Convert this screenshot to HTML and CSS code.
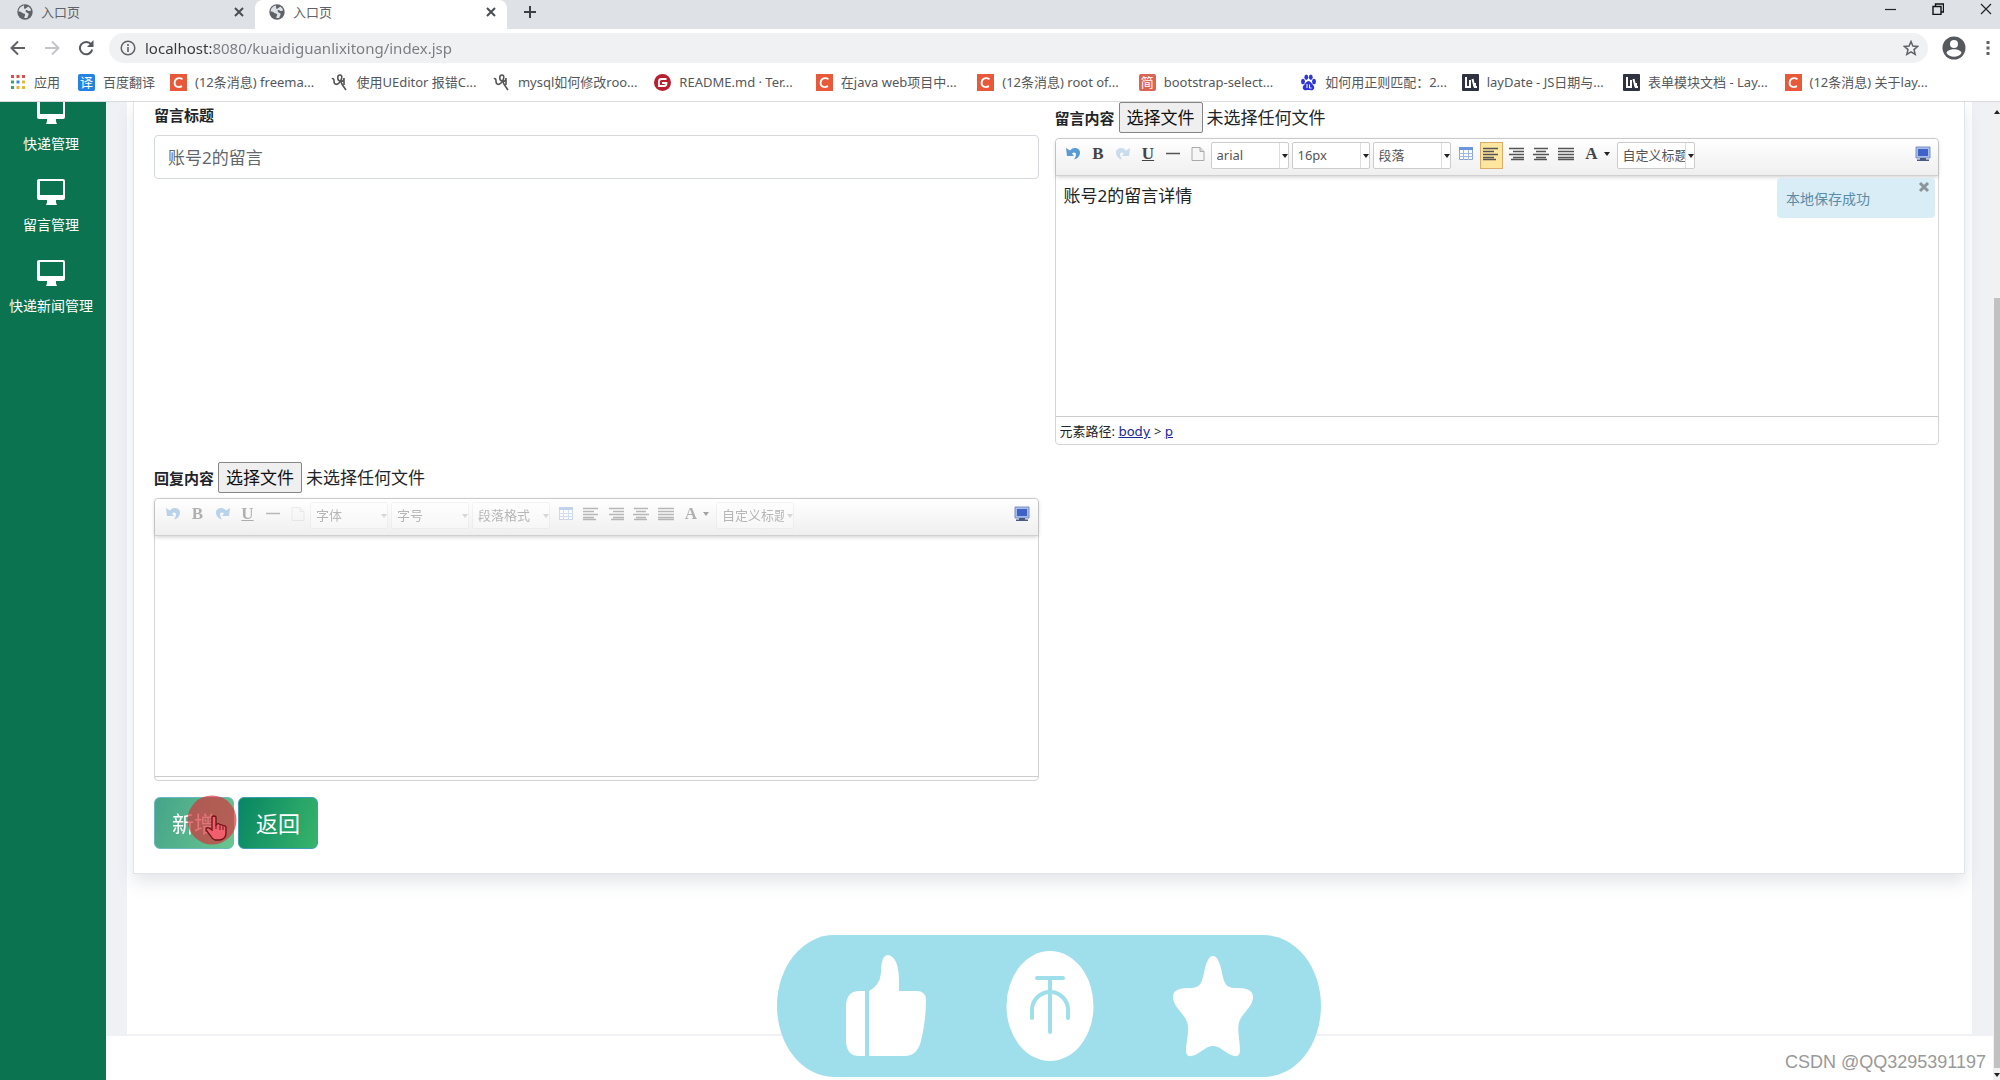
FILE: index.html
```html
<!DOCTYPE html>
<html lang="zh-CN">
<head>
<meta charset="utf-8">
<title>入口页</title>
<link rel="stylesheet" href="styles.css">
</head>
<body>
<svg class="defs" aria-hidden="true">
  <symbol id="globe" viewBox="0 0 16 16"><circle cx="8" cy="8" r="7.7" fill="#5f6368"/><path d="M7 1.6C4 2 1.8 4.500 1.600 7.500c1.400.2 2.800.4 3.500 1.200.8 1 2.600.5 3 1.700.3 1-.9 1.600-.8 3.400 1 .4 2.300.3 3.200-.1-.2-1.500 1.300-2 1.100-3.600-.2-1.300-1.900-1.200-2.500-2.100-.7-1-.8-1.700.3-2 1.200-.2 1.500 1.200 2.700 1.100.9 0 1.600-.5 2-.9-.5-1.600-1.600-2.900-3-3.700-.4 1-1.700 1.200-2.300 1.900-.5.600-1.200.6-1.600 0-.5-.8.300-1.500-.2-2.800z" fill="#dfe2e6"/></symbol>
  <symbol id="x" viewBox="0 0 12 12"><path d="M2 2l8 8M10 2l-8 8" stroke="#4a4d51" stroke-width="2" fill="none"/></symbol>
  <symbol id="csdn" viewBox="0 0 17 17"><path d="M0 0h17v17H0z" fill="#e8593a"/><path d="M12.500 5.200C9.500 3 5 4 4.600 8.500c-.3 4.500 4 5.500 7.400 3.600" stroke="#fff" stroke-width="1.800" fill="none"/></symbol>
  <symbol id="ue" viewBox="0 0 17 17"><path d="M1 5c1-1 2 0 2 2 0 4 3 4 5 2 3-3 4-8 1-8S6 6 9 7s4-1 4-3v7M10 8c1 3 3 5 5 8" stroke="#555" stroke-width="1.600" fill="none"/></symbol>
  <symbol id="lay" viewBox="0 0 17 17"><rect width="17" height="17" rx="1" fill="#2f3241"/><path d="M4 3v10h4V6M10.500 5l2 8M13 9v4h2" stroke="#fff" stroke-width="2" fill="none"/></symbol>
  <symbol id="monitor" viewBox="0 0 28 26"><path fill-rule="evenodd" d="M2 0h24q2 0 2 2v17q0 2-2 2h-7v2q0 1 1 3H9q1-2 1-3v-2H2q-2 0-2-2V2Q0 0 2 0zm1 2v14h23V2z" fill="#fff"/></symbol>
  <symbol id="undo" viewBox="0 0 16 16"><path d="M1 2l1 8h7L7 7.500c2-2 4-1 4 1 0 2-1 3-2 5 4-1 6-4 6-7 0-5-7-6-10-2z" fill="#5b9bd5"/></symbol>
  <symbol id="rule" viewBox="0 0 16 16"><path d="M1 7.500h14" stroke="#555" stroke-width="1.500"/></symbol>
  <symbol id="paste" viewBox="0 0 16 16"><path d="M2 1.500h8l4 4V14.500H2z" fill="#f6f6f6" stroke="#aaa"/><path d="M10 1.500v4h4" fill="#ddd" stroke="#aaa"/></symbol>
  <symbol id="table" viewBox="0 0 16 16"><path d="M1.500 1.500h13v12h-13z" fill="#fff" stroke="#8aa5cf"/><path d="M1 1h14v3H1z" fill="#6b95dc"/><path d="M1 7.500h14M1 10.500h14M5.500 4v10M10.500 4v10" stroke="#9db8de"/></symbol>
  <symbol id="al" viewBox="0 0 16 16"><path d="M0 2.500h15M0 5.500h11M0 8.500h15M0 11.500h11M0 13.500h13" stroke="#555" stroke-width="1.300"/></symbol>
  <symbol id="ar" viewBox="0 0 16 16"><path d="M1 2.500h15M5 5.500h11M1 8.500h15M5 11.500h11M3 13.500h13" stroke="#555" stroke-width="1.300"/></symbol>
  <symbol id="ac" viewBox="0 0 16 16"><path d="M1 2.500h14M3 5.500h10M0 8.500h16M3 11.500h10M1 13.500h13" stroke="#555" stroke-width="1.300"/></symbol>
  <symbol id="aj" viewBox="0 0 16 16"><path d="M0 2.500h16M0 5.500h16M0 8.500h16M0 11.500h16M0 13.500h16" stroke="#555" stroke-width="1.300"/></symbol>
  <symbol id="caret" viewBox="0 0 6 4"><path d="M0 0h6L3 4z" fill="#222"/></symbol>
  <symbol id="screen" viewBox="0 0 16 16"><path d="M1 1h14v11H1z" fill="#a9bce8" stroke="#7890c8"/><path d="M3 3h10v7H3z" fill="#3f62c8"/><path d="M5 12h6v1.500h3V15H2v-1.500h3z" fill="#4a5a80"/></symbol>
</svg>

<header class="browser">
  <div class="tabs">
    <div class="tab"><svg class="i16"><use href="#globe"/></svg><span>入口页</span><button class="plain" aria-label="关闭"><svg class="i12"><use href="#x"/></svg></button></div>
    <div class="tab active"><svg class="i16"><use href="#globe"/></svg><span>入口页</span><button class="plain" aria-label="关闭"><svg class="i12"><use href="#x"/></svg></button></div>
    <button class="plain newtab" aria-label="新标签页"><svg class="i14" viewBox="0 0 14 14"><path d="M7 1v12M1 7h12" stroke="#3c4043" stroke-width="2"/></svg></button>
    <div class="window">
      <button class="plain" aria-label="最小化"><svg class="i12" viewBox="0 0 12 12"><path d="M1 6.500h11" stroke="#222" stroke-width="1.200"/></svg></button>
      <button class="plain" aria-label="还原"><svg class="i12" viewBox="0 0 12 12"><path d="M1 3.500h8v8H1zM3.500 3V1H11.500v8H9.500" stroke="#111" stroke-width="1.400" fill="none"/></svg></button>
      <button class="plain" aria-label="关闭窗口"><svg class="i12" viewBox="0 0 12 12"><path d="M1 1l10 10M11 1L1 11" stroke="#222" stroke-width="1.200"/></svg></button>
    </div>
  </div>
  <div class="nav">
    <button class="plain" aria-label="后退"><svg class="i16" viewBox="0 0 16 16"><path d="M15 8H2M8 1.500L1.500 8 8 14.500" stroke="#5f6368" stroke-width="2" fill="none"/></svg></button>
    <button class="plain" aria-label="前进"><svg class="i16" viewBox="0 0 16 16"><path d="M1 8h13M8 1.500L14.500 8 8 14.500" stroke="#c4c6c9" stroke-width="2" fill="none"/></svg></button>
    <button class="plain" aria-label="刷新"><svg class="i16" viewBox="0 0 16 16"><path d="M13.200 4.500A6.200 6.200 0 1 0 14.200 9.500" stroke="#55595e" stroke-width="2" fill="none"/><path d="M15.500 0v7H9z" fill="#55595e"/></svg></button>
    <div class="address">
      <svg class="i16" viewBox="0 0 16 16"><circle cx="8" cy="8" r="6.800" stroke="#5f6368" stroke-width="1.500" fill="none"/><path d="M8 7v5M8 4v2" stroke="#5f6368" stroke-width="1.600"/></svg>
      <input class="url" type="text" aria-label="地址" value="localhost:8080/kuaidiguanlixitong/index.jsp">
      <svg class="i16" viewBox="0 0 16 16"><path d="M8 1.500l1.900 4.500 4.800.4-3.700 3.200 1.200 4.800L8 11.800l-4.200 2.600L5 9.600 1.300 6.400 6.100 6z" stroke="#5f6368" stroke-width="1.500" fill="none"/></svg>
    </div>
    <button class="plain profile" aria-label="用户"><svg class="i24" viewBox="0 0 24 24"><circle cx="12" cy="12" r="11.500" fill="#55595e"/><circle cx="12" cy="8" r="4" fill="#fff"/><path d="M4.500 17c1-5 14-5 15 0-3 5-12 5-15 0z" fill="#fff"/></svg></button>
    <button class="plain" aria-label="菜单"><svg class="i16" viewBox="0 0 16 16"><path d="M6.500 1h3v3h-3zM6.500 6.500h3v3h-3zM6.500 12h3v3h-3z" fill="#5f6368"/></svg></button>
  </div>
  <nav class="bookmarks">
    <a href="#" class="short"><svg class="i16" viewBox="0 0 16 16"><path d="M1 1h3v3H1zM6.500 1h3v3h-3zM12 1h3v3h-3z" fill="#d8504a"/><path d="M1 6.500h3v3H1z" fill="#3aa760"/><path d="M6.500 6.500h3v3h-3z" fill="#4285e8"/><path d="M12 6.500h3v3h-3z" fill="#e8b53a"/><path d="M1 12h3v3H1z" fill="#3aa760"/><path d="M6.500 12h3v3h-3zM12 12h3v3h-3z" fill="#e8b53a"/></svg><span>应用</span></a>
    <a href="#" class="mid"><b class="tile blue">译</b><span>百度翻译</span></a>
    <a href="#"><svg class="i17"><use href="#csdn"/></svg><span>(12条消息) freema...</span></a>
    <a href="#"><svg class="i17"><use href="#ue"/></svg><span>使用UEditor 报错C...</span></a>
    <a href="#"><svg class="i17"><use href="#ue"/></svg><span>mysql如何修改roo...</span></a>
    <a href="#"><svg class="i17" viewBox="0 0 17 17"><circle cx="8.500" cy="8.500" r="8.500" fill="#b8202f"/><path d="M12.500 5H7.500Q5 5 5 7.500v4.500h5q2.500 0 2.500-3H8" stroke="#fff" stroke-width="1.800" fill="none"/></svg><span>README.md · Ter...</span></a>
    <a href="#"><svg class="i17"><use href="#csdn"/></svg><span>在java web项目中...</span></a>
    <a href="#"><svg class="i17"><use href="#csdn"/></svg><span>(12条消息) root of...</span></a>
    <a href="#"><b class="tile red">简</b><span>bootstrap-select...</span></a>
    <a href="#"><svg class="i17" viewBox="0 0 17 17"><g fill="#2f36d8"><ellipse cx="3" cy="7.500" rx="2" ry="2.700"/><ellipse cx="6.300" cy="3.300" rx="1.900" ry="2.700"/><ellipse cx="10.800" cy="3.300" rx="1.900" ry="2.700"/><ellipse cx="14" cy="7.500" rx="2" ry="2.700"/><path d="M8.500 7c2 0 3 2.500 5 4.500 2 3-.5 5-2.500 4.700-2-.4-3-.4-5 0-2 .3-4.500-1.700-2.500-4.700C5.500 9.500 6.500 7 8.500 7z"/></g><path d="M7 10v4M9.500 10.500v3.500h2" stroke="#fff" fill="none"/></svg><span>如何用正则匹配：2...</span></a>
    <a href="#"><svg class="i17"><use href="#lay"/></svg><span>layDate - JS日期与...</span></a>
    <a href="#"><svg class="i17"><use href="#lay"/></svg><span>表单模块文档 - Lay...</span></a>
    <a href="#"><svg class="i17"><use href="#csdn"/></svg><span>(12条消息) 关于lay...</span></a>
  </nav>
</header>

<div class="page">
  <aside class="sidebar">
    <a href="#"><svg><use href="#monitor"/></svg>快递管理</a>
    <a href="#"><svg><use href="#monitor"/></svg>留言管理</a>
    <a href="#"><svg><use href="#monitor"/></svg>快递新闻管理</a>
  </aside>
  <div class="body">
    <main class="panel">
      <form class="card">
        <div class="fields">
          <div class="field">
            <label class="name title-label" for="title">留言标题</label>
            <input class="title" id="title" type="text" value="账号2的留言">
          </div>
          <div class="field">
            <div class="filerow"><label class="name" for="f1">留言内容</label><button type="button" class="file" id="f1">选择文件</button><span>未选择任何文件</span></div>
            <div class="editor">
              <div class="toolbar">
                <button type="button" class="tool" aria-label="撤销"><svg class="i16"><use href="#undo"/></svg></button>
                <button type="button" class="tool serif">B</button>
                <button type="button" class="tool faint" aria-label="重做"><svg class="i16 flip"><use href="#undo"/></svg></button>
                <button type="button" class="tool serif under">U</button>
                <button type="button" class="tool" aria-label="分隔线"><svg class="i16"><use href="#rule"/></svg></button>
                <button type="button" class="tool" aria-label="粘贴"><svg class="i16"><use href="#paste"/></svg></button>
                <span class="combo"><select aria-label="字体"><option>arial</option></select><i><svg class="caret"><use href="#caret"/></svg></i></span>
                <span class="combo"><select aria-label="字号"><option>16px</option></select><i><svg class="caret"><use href="#caret"/></svg></i></span>
                <span class="combo"><select aria-label="段落格式"><option>段落</option></select><i><svg class="caret"><use href="#caret"/></svg></i></span>
                <button type="button" class="tool" aria-label="表格"><svg class="i16"><use href="#table"/></svg></button>
                <button type="button" class="tool on" aria-label="左对齐"><svg class="i16"><use href="#al"/></svg></button>
                <button type="button" class="tool" aria-label="右对齐"><svg class="i16"><use href="#ar"/></svg></button>
                <button type="button" class="tool" aria-label="居中"><svg class="i16"><use href="#ac"/></svg></button>
                <button type="button" class="tool" aria-label="两端对齐"><svg class="i16"><use href="#aj"/></svg></button>
                <button type="button" class="tool color serif">A<svg class="caret"><use href="#caret"/></svg></button>
                <span class="combo"><select aria-label="自定义标题"><option>自定义标题</option></select><i><svg class="caret"><use href="#caret"/></svg></i></span>
                <button type="button" class="tool full" aria-label="全屏"><svg class="i16"><use href="#screen"/></svg></button>
              </div>
              <div class="area">
                <textarea aria-label="留言内容">账号2的留言详情</textarea>
                <div class="notice"><span>本地保存成功</span><button type="button" class="plain" aria-label="关闭提示"><svg class="i12" viewBox="0 0 12 12"><path d="M2 2l8 8M10 2l-8 8" stroke="#8b9498" stroke-width="3"/></svg></button></div>
              </div>
              <div class="path">元素路径: <a href="#">body</a> &gt; <a href="#">p</a></div>
            </div>
          </div>
          <div class="field">
            <div class="filerow"><label class="name" for="f2">回复内容</label><button type="button" class="file" id="f2">选择文件</button><span>未选择任何文件</span></div>
            <div class="editor">
              <div class="toolbar disabled">
                <button type="button" class="tool" aria-label="撤销"><svg class="i16"><use href="#undo"/></svg></button>
                <button type="button" class="tool serif">B</button>
                <button type="button" class="tool" aria-label="重做"><svg class="i16 flip"><use href="#undo"/></svg></button>
                <button type="button" class="tool serif under">U</button>
                <button type="button" class="tool" aria-label="分隔线"><svg class="i16"><use href="#rule"/></svg></button>
                <button type="button" class="tool faint" aria-label="粘贴"><svg class="i16"><use href="#paste"/></svg></button>
                <span class="combo"><select aria-label="字体"><option>字体</option></select><i><svg class="caret"><use href="#caret"/></svg></i></span>
                <span class="combo"><select aria-label="字号"><option>字号</option></select><i><svg class="caret"><use href="#caret"/></svg></i></span>
                <span class="combo"><select aria-label="段落格式"><option>段落格式</option></select><i><svg class="caret"><use href="#caret"/></svg></i></span>
                <button type="button" class="tool" aria-label="表格"><svg class="i16"><use href="#table"/></svg></button>
                <button type="button" class="tool" aria-label="左对齐"><svg class="i16"><use href="#al"/></svg></button>
                <button type="button" class="tool" aria-label="右对齐"><svg class="i16"><use href="#ar"/></svg></button>
                <button type="button" class="tool" aria-label="居中"><svg class="i16"><use href="#ac"/></svg></button>
                <button type="button" class="tool" aria-label="两端对齐"><svg class="i16"><use href="#aj"/></svg></button>
                <button type="button" class="tool color serif">A<svg class="caret"><use href="#caret"/></svg></button>
                <span class="combo"><select aria-label="自定义标题"><option>自定义标题</option></select><i><svg class="caret"><use href="#caret"/></svg></i></span>
                <button type="button" class="tool full" aria-label="全屏"><svg class="i16"><use href="#screen"/></svg></button>
              </div>
              <div class="area"><textarea aria-label="回复内容"></textarea></div>
              <div class="path empty"></div>
            </div>
          </div>
        </div>
        <div class="actions">
          <button type="button" class="btn pressed">新增</button>
          <button type="button" class="btn">返回</button>
          <svg class="pointer" viewBox="0 0 50 50" aria-hidden="true"><circle cx="25" cy="25" r="24.500" fill="#d8303a" fill-opacity=".68"/><path d="M25 22q2-2 4 0v8l1-1q2-1 3 1 2-1 3 1 3-1 3 2v5q0 6-6 7h-5q-3-1-5-5l-4-5q0-3 3-2l3 2z" fill="#f0606c" stroke="#6e1218" stroke-width="1.300"/><path d="M29 30v4M33 31v4M36 32v3" stroke="#6e1218"/></svg>
        </div>
      </form>
    </main>
  </div>
  <div class="scroll"><svg class="caret up"><use href="#caret"/></svg><div class="thumb"></div><svg class="caret"><use href="#caret"/></svg></div>
</div>

<div class="rate" aria-hidden="true">
  <svg viewBox="0 0 544 142" preserveAspectRatio="none">
    <g fill="#fff">
      <path d="M88 56v65h-6q-12 0-13-14V70q1-14 13-14zM92 56q11-6 12-18 0-18 7-18 11 2 11 27v9h18q8 0 9 8 0 22-5 42-4 15-16 15H92z"/>
      <ellipse cx="273" cy="71" rx="43.500" ry="55"/>
      <path d="M436 21c4 0 6 5 8 12 3 15 4 19 13 20 8 0 19 0 19 9 0 10-11 16-14 25-2 8 1 20 1 28 0 7-4 7-9 5-7-3-11-9-18-9s-11 6-18 9c-5 2-9 2-9-5 0-8 4-20 1-28-3-9-14-15-14-25 0-9 11-9 19-9 9-1 10-5 13-20 2-7 4-12 8-12z"/>
    </g>
    <path d="M260 43h26M273 43v54M255 83V75a18 18 0 0 1 36 0V83" fill="none" stroke="#9fdfec" stroke-width="4" stroke-linecap="round"/>
  </svg>
</div>
<div class="mark">CSDN @QQ3295391197</div>
</body>
</html>
```
FILE: styles.css
```css
* { box-sizing: border-box; }
body {
  margin: 0;
  min-height: 100vh;
  display: flex;
  flex-direction: column;
  background: #fff;
  color: #212529;
  font: 17px/24px "Noto Sans", "Noto Sans CJK SC", sans-serif;
  overflow: hidden;
}
.defs { display: none; }
svg { display: block; flex: none; }
button, input, select, textarea { font: inherit; color: inherit; margin: 0; }
.plain { border: 0; background: none; padding: 0; display: flex; }
.i12 { width: 12px; height: 12px; }
.i14 { width: 14px; height: 14px; }
.i16 { width: 16px; height: 16px; }
.i17 { width: 17px; height: 17px; }
.i24 { width: 24px; height: 24px; }

/* browser chrome */
.browser { border-bottom: 1px solid #d9dbde; }
.tabs { display: flex; height: 29px; padding-left: 3px; background: #dee1e6; }
.tab {
  width: 252px;
  padding: 0 10px 5px 14px;
  display: flex;
  align-items: center;
  gap: 8px;
  font-size: 13px;
  line-height: 20px;
  color: #5f6368;
}
.tab span { flex: 1; }
.tab.active { background: #fff; border-radius: 8px 8px 0 0; }
.newtab { padding: 5px 16px; }
.window { margin-left: auto; display: flex; gap: 36px; padding: 3px 8px; }
.nav { display: flex; align-items: center; gap: 18px; height: 38px; padding: 0 4px 0 10px; }
.address {
  flex: 1;
  display: flex;
  align-items: center;
  height: 30px;
  padding: 0 9px 0 11px;
  margin: 0 -4px 0 -3px;
  gap: 9px;
  border-radius: 15px;
  background: #f0f1f3;
}
.url {
  flex: 1;
  border: 0;
  padding: 0;
  font-size: 15px;
  line-height: 24px;
  background: linear-gradient(90deg, #35383c 66px, #777b80 66px);
  background-clip: text;
  -webkit-background-clip: text;
  -webkit-text-fill-color: transparent;
}
.nav .profile { margin-right: -4px; }
.bookmarks {
  display: flex;
  align-items: center;
  height: 34px;
  padding: 0 54px 4px 10px;
  font-size: 13px;
  line-height: 20px;
}
.bookmarks a {
  flex: 1 1 0;
  display: flex;
  align-items: center;
  gap: 8px;
  color: #54575b;
  text-decoration: none;
  white-space: nowrap;
}
.bookmarks .short { flex: 0 0 68px; }
.bookmarks .mid { flex: 0 0 92px; }
.tile {
  width: 17px;
  height: 17px;
  border-radius: 2px;
  color: #fff;
  font-size: 13px;
  font-weight: 400;
  line-height: 17px;
  text-align: center;
}
.blue { background: #2483e0; }
.red { background: #dc6455; }

/* application */
.page { flex: 1; display: flex; overflow: hidden; }
.sidebar { width: 106px; padding-right: 4px; background: #0b7350; overflow: hidden; flex: none; }
.sidebar a {
  display: flex;
  flex-direction: column;
  align-items: center;
  gap: 10px;
  padding-bottom: 25px;
  color: #fff;
  font-size: 14px;
  line-height: 20px;
  text-decoration: none;
}
.sidebar a:first-child { margin-top: -4px; }
.sidebar svg { width: 28px; height: 26px; }
.body { flex: 1; padding-bottom: 44px; min-width: 0; display: flex; }
.panel {
  flex: 1;
  min-width: 0;
  border: solid #f0f1f5;
  border-width: 0 21px 2px;
  padding: 0 7px 0 6px;
}
.card {
  padding: 0 25px 24px 20px;
  border: 1px solid #e1e4e8;
  border-top: 0;
  box-shadow: 0 8px 16px rgba(60, 80, 110, .15);
  background: #fff;
}
.fields { display: grid; grid-template-columns: 1fr 1fr; gap: 17px 16px; }
.field { min-width: 0; }
.name { font-size: 15px; font-weight: 700; }
.title-label { display: block; padding: 1px 0 8px; }
.title {
  width: 100%;
  height: 44px;
  padding: 0 13px 2px;
  border: 1px solid #d5d8dc;
  border-radius: 4px;
  color: #61676d;
}
.filerow { display: flex; align-items: center; gap: 4px; height: 31px; margin-bottom: 5px; }
.file {
  height: 31px;
  padding: 0 7px;
  border: 1px solid #858585;
  border-radius: 2px;
  background: #efefef;
  color: #111;
  line-height: 24px;
}
.editor { border: 1px solid #d4d4d4; border-radius: 4px; background: #fff; }
.toolbar {
  display: flex;
  align-items: center;
  height: 37px;
  padding: 0 3px 3px 5px;
  border-bottom: 1px solid #d0d0d0;
  border-radius: 4px 4px 0 0;
  background: linear-gradient(#fff, #efefef);
  box-shadow: 0 1px 4px rgba(0, 0, 0, .2);
  font-size: 13px;
  line-height: 20px;
}
.tool {
  width: 25px;
  height: 27px;
  padding: 0 0 3px;
  border: 1px solid transparent;
  background: none;
  display: flex;
  align-items: center;
  justify-content: center;
  flex: none;
}
.serif { font: 700 17px/20px "Liberation Serif", serif; color: #444; }
.under { text-decoration: underline; }
.faint { opacity: .3; }
.flip { transform: scaleX(-1); }
.on { width: 23px; margin: 0 1px; border-color: #dcac6c; background: #ffe69f; }
.color { width: 38px; gap: 6px; }
.caret { width: 6px; height: 4px; }
.combo {
  display: flex;
  width: 78px;
  height: 27px;
  margin: 0 3px 0 0;
  border: 1px solid #ccc;
  border-radius: 2px;
  background: #fff;
  flex: none;
}
.combo select {
  appearance: none;
  flex: 1;
  min-width: 0;
  padding: 0 0 2px 5px;
  border: 0;
  background: none;
  color: #555;
  overflow: hidden;
  text-overflow: clip;
}
.combo i { width: 9px; border-left: 1px solid #ddd; display: flex; align-items: center; justify-content: flex-end; }
.full { margin-left: auto; }
.disabled .tool:not(.full), .disabled .combo { opacity: .4; }
.disabled .faint.tool { opacity: .2; }
.disabled .combo { border-color: #e4e4e4; }
.disabled .combo i { border-color: transparent; }
.disabled .combo .caret { opacity: .4; }
.area { position: relative; display: flex; }
.area textarea {
  flex: 1;
  height: 240px;
  padding: 8px;
  border: 0;
  resize: none;
  background: none;
  color: #222;
}
.notice {
  position: absolute;
  top: 2px;
  right: 3px;
  width: 158px;
  height: 40px;
  padding: 3px 5px 0 9px;
  display: flex;
  align-items: flex-start;
  justify-content: space-between;
  border-radius: 4px;
  background: #d9edf7;
  color: #5b8ba6;
  font-size: 14px;
}
.notice span { padding-top: 6px; line-height: 24px; }
.path { height: 28px; padding: 0 4px; border-top: 1px solid #ccc; font-size: 13px; line-height: 28px; }
.path a { font-family: "DejaVu Sans", sans-serif; color: #1c2b9c; }
.path.empty { height: 4px; }
.actions { position: relative; display: flex; gap: 4px; padding-top: 16px; }
.btn {
  width: 80px;
  height: 52px;
  border: 1px solid #3a9fae;
  border-radius: 6px;
  background: linear-gradient(110deg, #078663, #38b46a);
  color: #fff;
  font-size: 22px;
  line-height: 32px;
  padding: 0;
}
.pressed { opacity: .75; }
.pointer { position: absolute; left: 33px; top: 14px; width: 50px; height: 50px; }
.scroll {
  width: 7px;
  background: #f1f1f1;
  display: flex;
  flex-direction: column;
  align-items: flex-end;
  justify-content: space-between;
  padding: 8px 0 3px;
  overflow: hidden;
}
.scroll .up { transform: rotate(180deg); }
.thumb { width: 6px; flex: 1; margin: 184px 0 5px; background: #c1c1c1; }

/* floating overlays */
.rate {
  position: absolute;
  left: 50%;
  bottom: 3px;
  width: 544px;
  height: 142px;
  margin-left: -223px;
  border-radius: 57px / 71px;
  background: #9fdfec;
}
.rate svg { width: 100%; height: 100%; }
.mark {
  position: absolute;
  right: 14px;
  bottom: 6px;
  font: 18px/24px "Liberation Sans", sans-serif;
  color: #999;
}
```
